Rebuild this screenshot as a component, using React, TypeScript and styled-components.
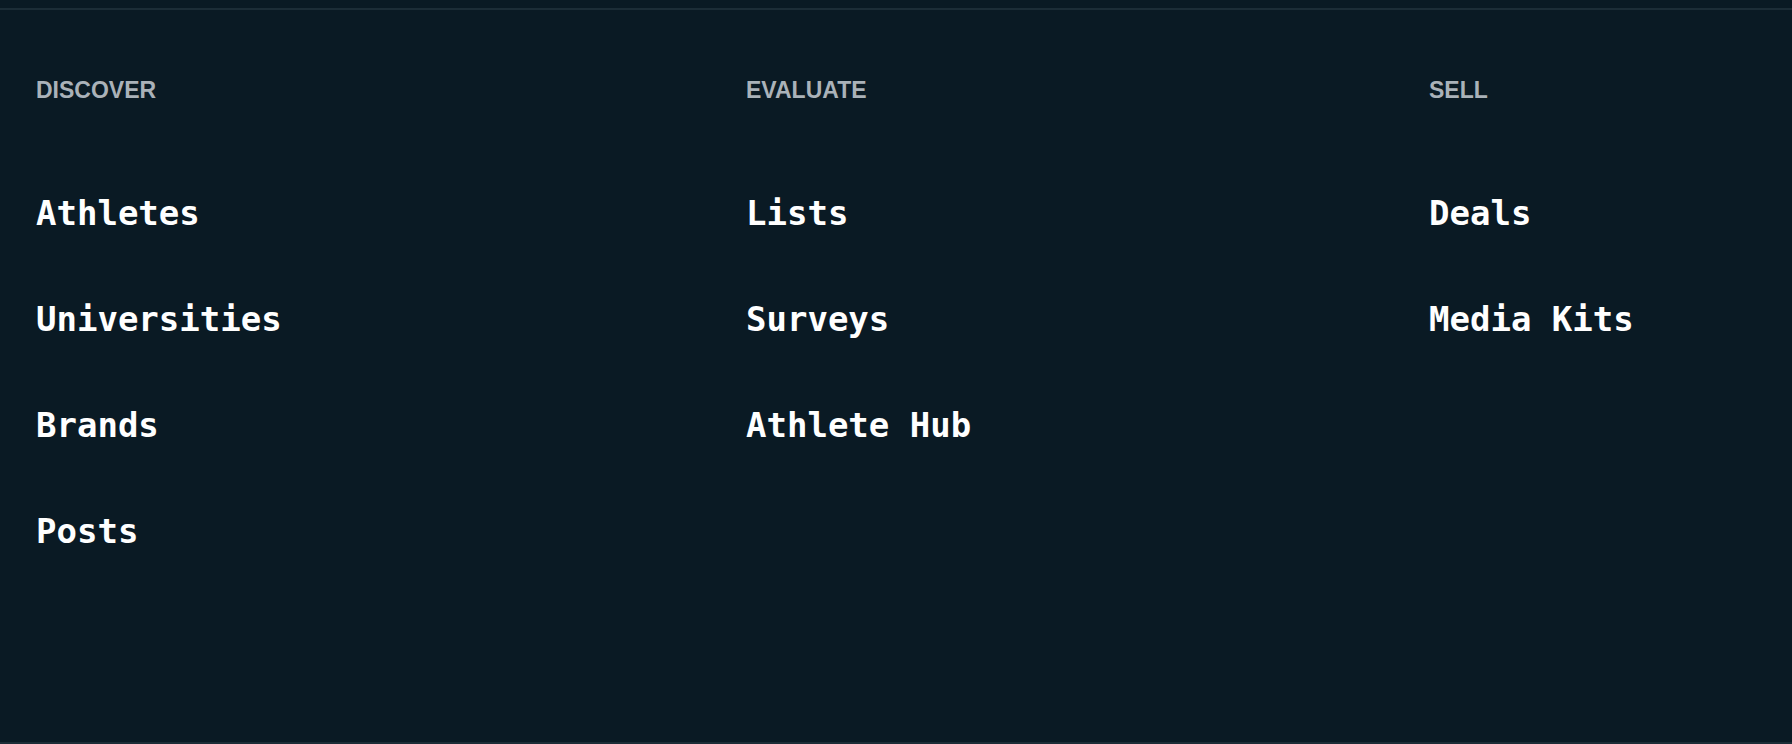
import styled, { createGlobalStyle } from "styled-components";

const GlobalStyle = createGlobalStyle`
  html,
  body {
    margin: 0;
    padding: 0;
    background-color: #0a1a24;
  }

  #root {
    padding-top: 8px;
  }
`;

const MenuPanel = styled.nav`
  box-sizing: border-box;
  height: 736px;
  padding: 69px 36px 0;
  border-top: 2px solid #1c2d37;
  border-bottom: 2px solid #1c2d37;
  background-color: #0a1a24;
  display: grid;
  grid-template-columns: 710px 683px 1fr;
  align-items: start;
`;

const Column = styled.div`
  display: flex;
  flex-direction: column;
`;

const Heading = styled.h3`
  margin: 0 0 94px;
  font-family: "Liberation Sans", Arial, sans-serif;
  font-size: 23px;
  line-height: 23px;
  font-weight: 700;
  color: #aab2b9;
  text-transform: uppercase;
`;

const LinkList = styled.ul`
  list-style: none;
  margin: 0;
  padding: 0;
  display: flex;
  flex-direction: column;
  gap: 72px;
`;

const MenuLink = styled.a`
  display: block;
  font-family: "DejaVu Sans Mono", monospace;
  font-size: 34px;
  line-height: 34px;
  font-weight: 700;
  color: #ffffff;
  text-decoration: none;
  cursor: pointer;

  &:hover {
    color: #cfd6dc;
  }
`;

const sections = [
  { title: "Discover", links: ["Athletes", "Universities", "Brands", "Posts"] },
  { title: "Evaluate", links: ["Lists", "Surveys", "Athlete Hub"] },
  { title: "Sell", links: ["Deals", "Media Kits"] },
];

function App() {
  return (
    <>
      <GlobalStyle />
      <MenuPanel>
        {sections.map((section) => (
          <Column key={section.title}>
            <Heading>{section.title}</Heading>
            <LinkList>
              {section.links.map((link) => (
                <li key={link}>
                  <MenuLink>{link}</MenuLink>
                </li>
              ))}
            </LinkList>
          </Column>
        ))}
      </MenuPanel>
    </>
  );
}

export default App;
